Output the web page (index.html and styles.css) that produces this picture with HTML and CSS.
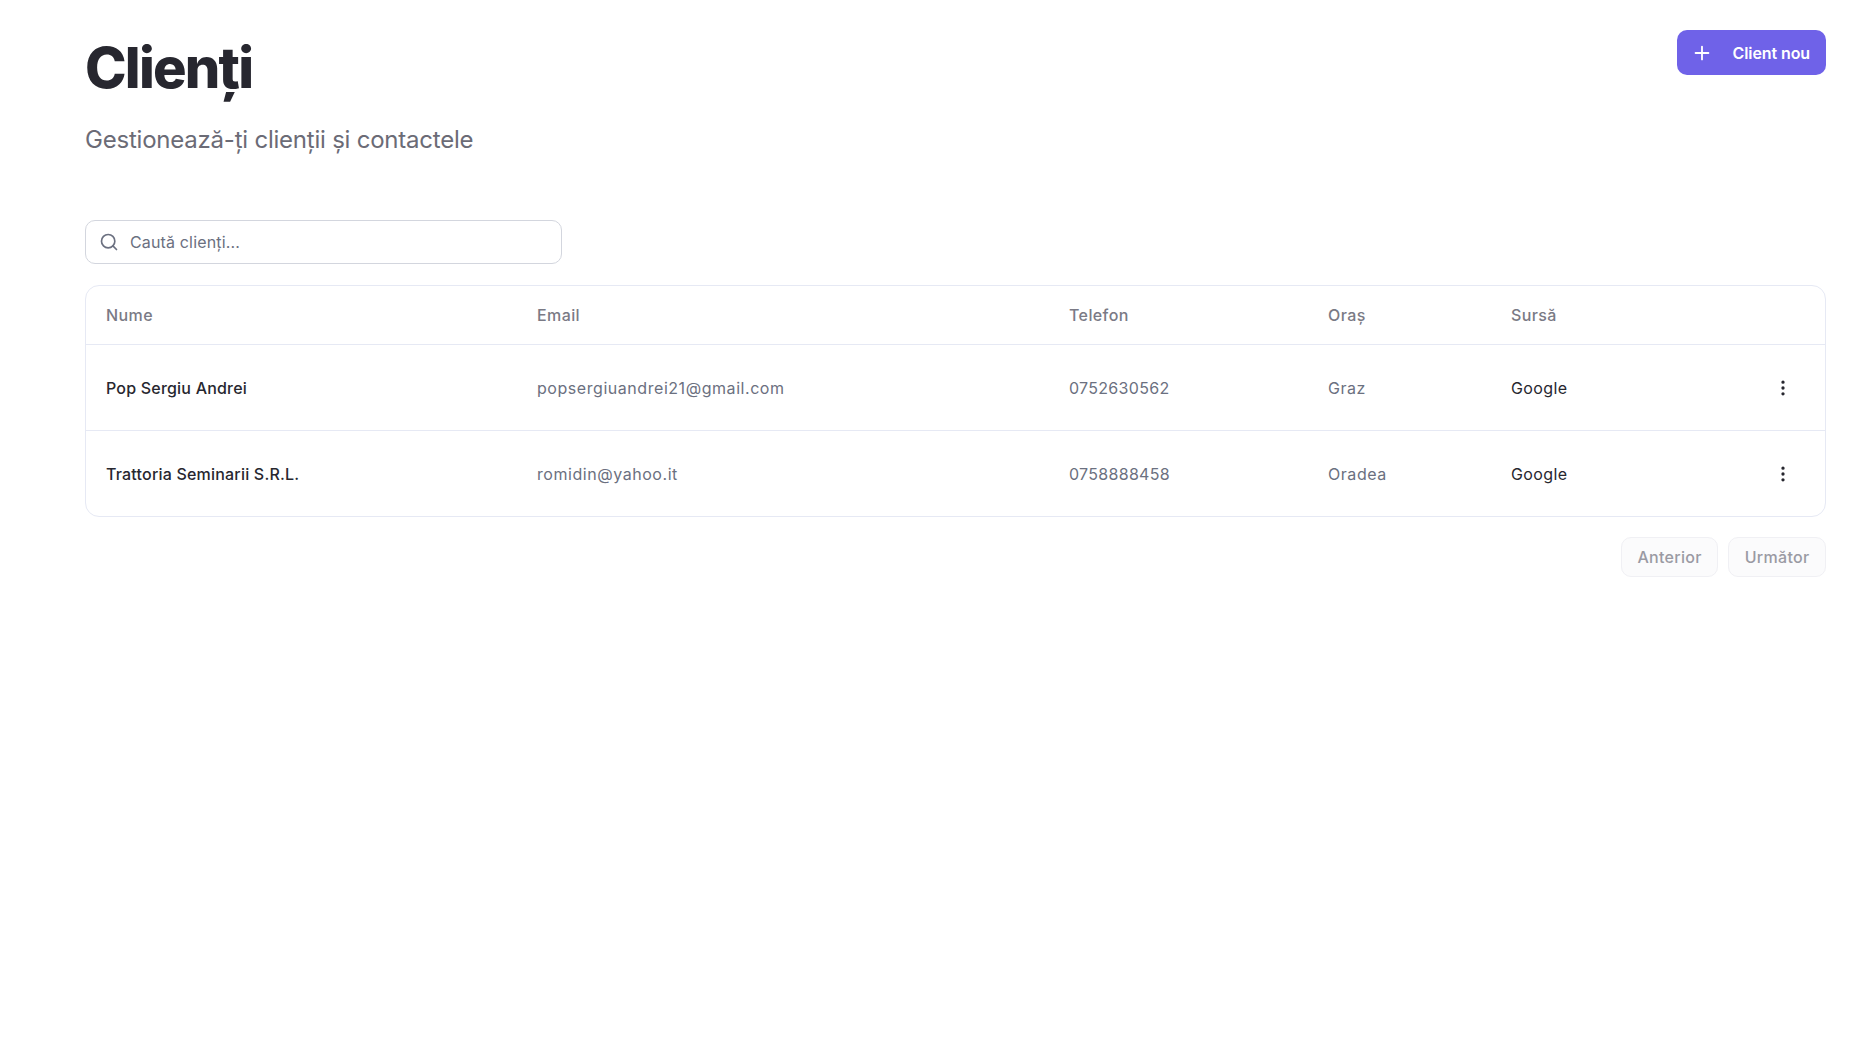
FILE: index.html
```html
<!DOCTYPE html>
<html lang="ro">
<head>
<meta charset="utf-8">
<title>Clienți</title>
<link rel="stylesheet" href="styles.css">
</head>
<body>
<main class="page">
  <header class="head">
    <div>
      <h1 class="title">Clienți</h1>
      <p class="subtitle">Gestionează-ți clienții și contactele</p>
    </div>
    <button class="primary">
      <svg class="plus" viewBox="0 0 24 24" fill="none" stroke="currentColor" stroke-width="2" stroke-linecap="round"><path d="M5 12h14M12 5v14"/></svg>
      <span>Client nou</span>
    </button>
  </header>
  <div class="search">
    <svg class="search-icon" viewBox="0 0 24 24" fill="none" stroke="currentColor" stroke-width="2" stroke-linecap="round" stroke-linejoin="round"><circle cx="11" cy="11" r="8"/><path d="m21 21-4.3-4.3"/></svg>
    <span class="placeholder">Caută clienți...</span>
  </div>
  <div class="card">
    <table class="table">
      <colgroup>
        <col class="c1"><col class="c2"><col class="c3"><col class="c4"><col class="c5"><col class="c6">
      </colgroup>
      <thead>
        <tr><th>Nume</th><th>Email</th><th>Telefon</th><th>Oraș</th><th>Sursă</th><th></th></tr>
      </thead>
      <tbody>
        <tr>
          <td class="name">Pop Sergiu Andrei</td><td class="wide">popsergiuandrei21@gmail.com</td><td class="num">0752630562</td><td class="wide">Graz</td><td class="source">Google</td>
          <td class="act"><svg class="dots" viewBox="0 0 24 24" fill="none" stroke="currentColor" stroke-width="2" stroke-linecap="round" stroke-linejoin="round"><circle cx="12" cy="12" r="1"/><circle cx="12" cy="5" r="1"/><circle cx="12" cy="19" r="1"/></svg></td>
        </tr>
        <tr>
          <td class="name">Trattoria Seminarii S.R.L.</td><td class="wide">romidin@yahoo.it</td><td class="num">0758888458</td><td class="wide">Oradea</td><td class="source">Google</td>
          <td class="act"><svg class="dots" viewBox="0 0 24 24" fill="none" stroke="currentColor" stroke-width="2" stroke-linecap="round" stroke-linejoin="round"><circle cx="12" cy="12" r="1"/><circle cx="12" cy="5" r="1"/><circle cx="12" cy="19" r="1"/></svg></td>
        </tr>
      </tbody>
    </table>
  </div>
  <nav class="pager">
    <button class="ghost">Anterior</button>
    <button class="ghost">Următor</button>
  </nav>
</main>
</body>
</html>
```
FILE: styles.css
```css
* { box-sizing: border-box; }
html, body { margin: 0; background: #fff; }
body { font-family: Inter, "Noto Sans", sans-serif; color: #27272f; }
.page { padding: 36px 49px 0 85px; }
.head { display: flex; justify-content: space-between; align-items: flex-start; }
.title { margin: 0; font-size: 56px; line-height: 64px; font-weight: 800; letter-spacing: -1.8px; color: #27272f; }
.subtitle { margin: 24px 0 0; font-size: 24px; line-height: 32px; font-weight: 400; letter-spacing: -0.22px; color: #6b6b76; }
.primary { display: flex; align-items: center; gap: 20px; height: 45px; margin-top: -6px; padding: 0 16px 0 14px; border: 0; border-radius: 10px; background: #6f62e8; color: #fff; font: 600 16px Inter, sans-serif; letter-spacing: -0.1px; }
.plus { width: 22px; height: 22px; }
.search { display: flex; align-items: center; width: 477px; height: 44px; margin-top: 64px; padding: 0 13px; border: 1px solid #d3d6de; border-radius: 10px; }
.search-icon { width: 20px; height: 20px; color: #6b7080; }
.placeholder { margin-left: 11px; font-size: 16px; color: #6b7080; letter-spacing: 0.15px; }
.card { margin-top: 21px; border: 1px solid #e6e9f4; border-radius: 14px; overflow: hidden; }
.table { width: 100%; border-collapse: collapse; table-layout: fixed; }
.c1 { width: 431px; } .c2 { width: 532px; } .c3 { width: 259px; } .c4 { width: 183px; } .c6 { width: 72px; }
th, td { padding: 0 0 0 20px; text-align: left; font-size: 16px; font-weight: 400; }
th { height: 58px; color: #7a7a85; font-weight: 500; letter-spacing: 0.4px; }
td { height: 86px; padding-top: 1px; color: #6b7080; border-top: 1px solid #e6e9f4; }
.wide { letter-spacing: 0.55px; }
.num { letter-spacing: 0.3px; }
.name { color: #27272f; font-weight: 500; letter-spacing: 0.2px; }
.source { color: #27272f; letter-spacing: 0.4px; }
.dots { display: block; width: 20px; height: 20px; color: #27272f; }
.pager { display: flex; justify-content: flex-end; gap: 10px; margin-top: 20px; }
.ghost { height: 40px; padding: 0 15.5px; border: 1px solid #f0f0f4; border-radius: 10px; background: #fbfbfc; color: #9a9aa3; font: 500 16px Inter, sans-serif; letter-spacing: 0.3px; }
```
